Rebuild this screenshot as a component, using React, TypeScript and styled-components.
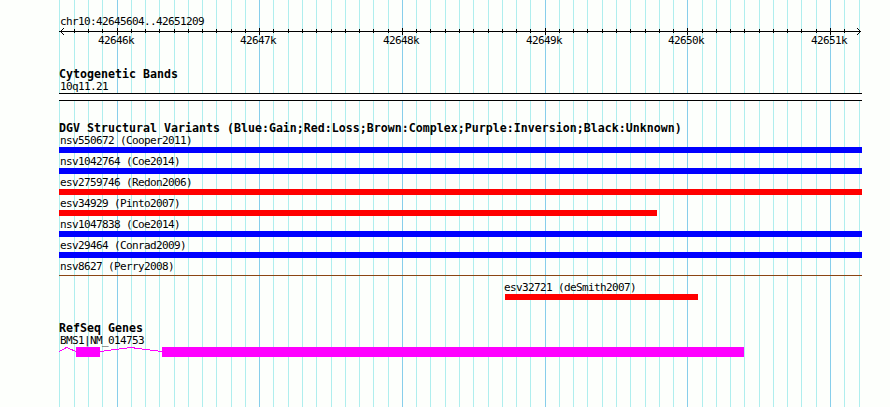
import React from "react";
import styled, { createGlobalStyle } from "styled-components";

const GlobalStyle = createGlobalStyle`
  html, body { margin: 0; padding: 0; background: #fdfffc; }
`;

const WIDTH = 803;
const ORIGIN = 59;

const majorLines = [117, 259, 402, 545, 687, 830];
const minorLines = [
  59, 74, 88, 102, 131, 145, 159, 174, 188, 202, 216, 231, 245, 273, 288, 302,
  316, 331, 345, 359, 373, 388, 416, 430, 445, 459, 473, 488, 502, 516, 530,
  559, 573, 587, 602, 616, 630, 645, 659, 673, 702, 716, 730, 744, 759, 773,
  787, 801, 816, 844, 859,
];

const Page = styled.main`
  position: relative;
  box-sizing: border-box;
  width: 890px;
  height: 407px;
  padding: 15px 0 0 ${ORIGIN}px;
  overflow: hidden;
  background: #fdfffc;
  color: #000;
  font-family: "DejaVu Sans Mono", monospace;
  font-size: 11px;
  line-height: 13px;
`;

const Gridlines = styled.svg`
  position: absolute;
  inset: 0;
  display: block;
`;

const Tracks = styled.div`
  position: relative;
  display: flex;
  flex-direction: column;
  width: ${WIDTH}px;
`;

const Label = styled.div<{ $x?: number }>`
  height: 13px;
  padding-left: ${(p) => (p.$x ?? 0) + 1}px;
  letter-spacing: -0.622px;
  white-space: pre;
`;

const Title = styled.h2`
  height: 12px;
  margin: 0;
  font-size: 11.6px;
  font-weight: 700;
  line-height: 13px;
  letter-spacing: 0.016px;
  white-space: pre;
`;

const Axis = styled.svg`
  display: block;
  width: ${WIDTH}px;
  height: 20px;
  overflow: visible;
`;

const TickLabel = styled.text`
  fill: #000;
  letter-spacing: -0.622px;
`;

const Track = styled.section<{ $gap: number }>`
  margin-top: ${(p) => p.$gap}px;
`;

const Band = styled.div`
  box-sizing: border-box;
  height: 8px;
  border: solid #000;
  border-width: 1px 0;
  background: #fff;
`;

const Row = styled.div`
  height: 21px;
`;

const Bar = styled.div<{ $x: number; $w: number; $color: string; $thin?: boolean }>`
  width: ${(p) => p.$w}px;
  height: ${(p) => (p.$thin ? 1 : 6)}px;
  margin-top: ${(p) => (p.$thin ? 2 : 0)}px;
  margin-left: ${(p) => p.$x}px;
  background: ${(p) => p.$color};
`;

const GeneModel = styled.svg`
  display: block;
  width: ${WIDTH}px;
  height: 10px;
`;

type Variant = { name: string; x?: number; w?: number; color: string; thin?: boolean };

const variants: Variant[] = [
  { name: "nsv550672 (Cooper2011)", color: "#00f" },
  { name: "nsv1042764 (Coe2014)", color: "#00f" },
  { name: "esv2759746 (Redon2006)", color: "#f00" },
  { name: "esv34929 (Pinto2007)", w: 598, color: "#f00" },
  { name: "nsv1047838 (Coe2014)", color: "#00f" },
  { name: "esv29464 (Conrad2009)", color: "#00f" },
  { name: "nsv8627 (Perry2008)", color: "#8b4513", thin: true },
  { name: "esv32721 (deSmith2007)", x: 446, w: 193, color: "#f00" },
];

function Ruler() {
  return (
    <Axis shapeRendering="crispEdges">
      <rect x="0" y="3" width="802" height="1" />
      {minorLines.slice(1, -1).map((x) => (
        <rect key={x} x={x - ORIGIN} y="1" width="1" height="4" />
      ))}
      {majorLines.map((x) => (
        <rect key={x} x={x - ORIGIN} y="0" width="1" height="7" />
      ))}
      <path
        d="M4.5 0.5L1.5 3.5L4.5 6.5M798.5 0.5L801.5 3.5L798.5 6.5"
        fill="none"
        stroke="#000"
        strokeLinecap="square"
      />
      {majorLines.map((x, i) => (
        <TickLabel key={x} x={x - ORIGIN - 19} y="16">
          {`${42646 + i}k`}
        </TickLabel>
      ))}
    </Axis>
  );
}

export default function App() {
  return (
    <>
      <GlobalStyle />
      <Page>
        <Gridlines width="890" height="407" shapeRendering="crispEdges">
          {minorLines.map((x) => (
            <rect key={x} x={x} y="0" width="1" height="407" fill="#afeeee" />
          ))}
          {majorLines.map((x) => (
            <rect key={x} x={x} y="0" width="1" height="407" fill="#87ceeb" />
          ))}
        </Gridlines>
        <Tracks>
          <Label>chr10:42645604..42651209</Label>
          <Ruler />
          <Track $gap={20}>
            <Title>Cytogenetic Bands</Title>
            <Label>10q11.21</Label>
            <Band />
          </Track>
          <Track $gap={21}>
            <Title>
              DGV Structural Variants (Blue:Gain;Red:Loss;Brown:Complex;Purple:Inversion;Black:Unknown)
            </Title>
            {variants.map((v) => (
              <Row key={v.name}>
                <Label $x={v.x ? v.x - 2 : 0}>{v.name}</Label>
                <Bar $x={v.x ?? 0} $w={v.w ?? WIDTH} $color={v.color} $thin={v.thin} />
              </Row>
            ))}
          </Track>
          <Track $gap={20}>
            <Title>RefSeq Genes</Title>
            <Label>BMS1|NM_014753</Label>
            <GeneModel shapeRendering="crispEdges">
              <path
                d="M0 4.5L7.5 0.5L17 4.5M41 4.5L71.5 0.5L103 4.5"
                fill="none"
                stroke="#f0f"
              />
              <rect x="17" y="0" width="24" height="10" fill="#f0f" />
              <rect x="103" y="0" width="582" height="10" fill="#f0f" />
            </GeneModel>
          </Track>
        </Tracks>
      </Page>
    </>
  );
}
